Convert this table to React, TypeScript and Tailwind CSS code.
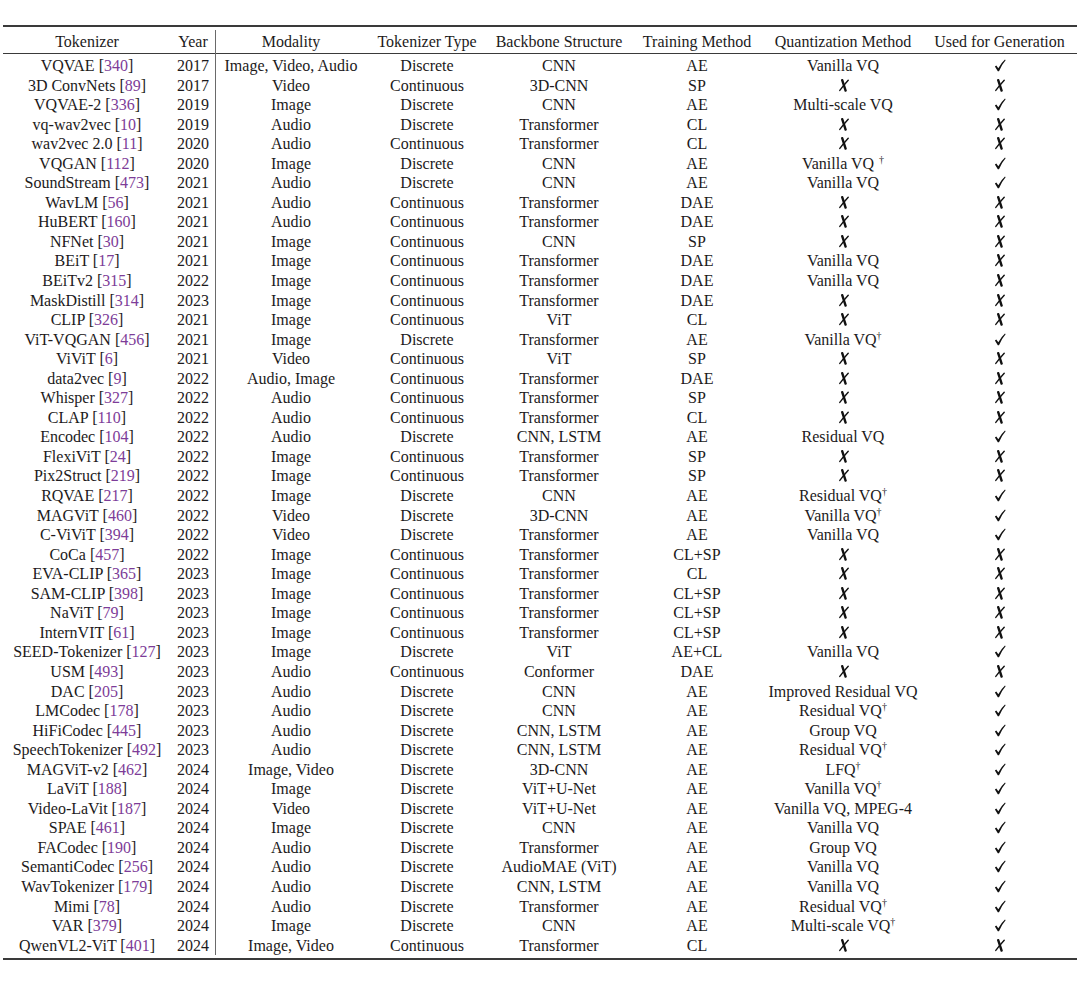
import React from "react";

type Row = [string, string, string, string, string, string, string, string, string];
// name, ref, year, modality, type, backbone, training, quant, used
const rows: Row[] = [
  ["VQVAE", "340", "2017", "Image, Video, Audio", "Discrete", "CNN", "AE", "Vanilla VQ", "y"],
  ["3D ConvNets", "89", "2017", "Video", "Continuous", "3D-CNN", "SP", "x", "x"],
  ["VQVAE-2", "336", "2019", "Image", "Discrete", "CNN", "AE", "Multi-scale VQ", "y"],
  ["vq-wav2vec", "10", "2019", "Audio", "Discrete", "Transformer", "CL", "x", "x"],
  ["wav2vec 2.0", "11", "2020", "Audio", "Continuous", "Transformer", "CL", "x", "x"],
  ["VQGAN", "112", "2020", "Image", "Discrete", "CNN", "AE", "Vanilla VQ |s", "y"],
  ["SoundStream", "473", "2021", "Audio", "Discrete", "CNN", "AE", "Vanilla VQ", "y"],
  ["WavLM", "56", "2021", "Audio", "Continuous", "Transformer", "DAE", "x", "x"],
  ["HuBERT", "160", "2021", "Audio", "Continuous", "Transformer", "DAE", "x", "x"],
  ["NFNet", "30", "2021", "Image", "Continuous", "CNN", "SP", "x", "x"],
  ["BEiT", "17", "2021", "Image", "Continuous", "Transformer", "DAE", "Vanilla VQ", "x"],
  ["BEiTv2", "315", "2022", "Image", "Continuous", "Transformer", "DAE", "Vanilla VQ", "x"],
  ["MaskDistill", "314", "2023", "Image", "Continuous", "Transformer", "DAE", "x", "x"],
  ["CLIP", "326", "2021", "Image", "Continuous", "ViT", "CL", "x", "x"],
  ["ViT-VQGAN", "456", "2021", "Image", "Discrete", "Transformer", "AE", "Vanilla VQ|", "y"],
  ["ViViT", "6", "2021", "Video", "Continuous", "ViT", "SP", "x", "x"],
  ["data2vec", "9", "2022", "Audio, Image", "Continuous", "Transformer", "DAE", "x", "x"],
  ["Whisper", "327", "2022", "Audio", "Continuous", "Transformer", "SP", "x", "x"],
  ["CLAP", "110", "2022", "Audio", "Continuous", "Transformer", "CL", "x", "x"],
  ["Encodec", "104", "2022", "Audio", "Discrete", "CNN, LSTM", "AE", "Residual VQ", "y"],
  ["FlexiViT", "24", "2022", "Image", "Continuous", "Transformer", "SP", "x", "x"],
  ["Pix2Struct", "219", "2022", "Image", "Continuous", "Transformer", "SP", "x", "x"],
  ["RQVAE", "217", "2022", "Image", "Discrete", "CNN", "AE", "Residual VQ|", "y"],
  ["MAGViT", "460", "2022", "Video", "Discrete", "3D-CNN", "AE", "Vanilla VQ|", "y"],
  ["C-ViViT", "394", "2022", "Video", "Discrete", "Transformer", "AE", "Vanilla VQ", "y"],
  ["CoCa", "457", "2022", "Image", "Continuous", "Transformer", "CL+SP", "x", "x"],
  ["EVA-CLIP", "365", "2023", "Image", "Continuous", "Transformer", "CL", "x", "x"],
  ["SAM-CLIP", "398", "2023", "Image", "Continuous", "Transformer", "CL+SP", "x", "x"],
  ["NaViT", "79", "2023", "Image", "Continuous", "Transformer", "CL+SP", "x", "x"],
  ["InternVIT", "61", "2023", "Image", "Continuous", "Transformer", "CL+SP", "x", "x"],
  ["SEED-Tokenizer", "127", "2023", "Image", "Discrete", "ViT", "AE+CL", "Vanilla VQ", "y"],
  ["USM", "493", "2023", "Audio", "Continuous", "Conformer", "DAE", "x", "x"],
  ["DAC", "205", "2023", "Audio", "Discrete", "CNN", "AE", "Improved Residual VQ", "y"],
  ["LMCodec", "178", "2023", "Audio", "Discrete", "CNN", "AE", "Residual VQ|", "y"],
  ["HiFiCodec", "445", "2023", "Audio", "Discrete", "CNN, LSTM", "AE", "Group VQ", "y"],
  ["SpeechTokenizer", "492", "2023", "Audio", "Discrete", "CNN, LSTM", "AE", "Residual VQ|", "y"],
  ["MAGViT-v2", "462", "2024", "Image, Video", "Discrete", "3D-CNN", "AE", "LFQ|", "y"],
  ["LaViT", "188", "2024", "Image", "Discrete", "ViT+U-Net", "AE", "Vanilla VQ|", "y"],
  ["Video-LaVit", "187", "2024", "Video", "Discrete", "ViT+U-Net", "AE", "Vanilla VQ, MPEG-4", "y"],
  ["SPAE", "461", "2024", "Image", "Discrete", "CNN", "AE", "Vanilla VQ", "y"],
  ["FACodec", "190", "2024", "Audio", "Discrete", "Transformer", "AE", "Group VQ", "y"],
  ["SemantiCodec", "256", "2024", "Audio", "Discrete", "AudioMAE (ViT)", "AE", "Vanilla VQ", "y"],
  ["WavTokenizer", "179", "2024", "Audio", "Discrete", "CNN, LSTM", "AE", "Vanilla VQ", "y"],
  ["Mimi", "78", "2024", "Audio", "Discrete", "Transformer", "AE", "Residual VQ|", "y"],
  ["VAR", "379", "2024", "Image", "Discrete", "CNN", "AE", "Multi-scale VQ|", "y"],
  ["QwenVL2-ViT", "401", "2024", "Image, Video", "Continuous", "Transformer", "CL", "x", "x"],
];

const grid =
  "grid grid-cols-[168px_45px_150px_122px_142px_134px_158px_155px]";

function Check() {
  return (
    <svg width="12" height="13" viewBox="0 0 12 13" className="inline-block align-[-1px]">
      <path
        d="M0.9 7.6 L2.3 6.6 L4.3 9.3 Q7 4.2 11 0.6 L11.6 1.3 Q7.8 5.6 5.0 12.2 L3.8 12.2 Z"
        fill="#111"
      />
    </svg>
  );
}

function Cross() {
  return (
    <svg width="11" height="13" viewBox="0 0 11 13" className="inline-block align-[-1px]">
      <path d="M4.2 1.2 Q5.8 6 7.6 11.6" stroke="#111" strokeWidth="2.4" fill="none" strokeLinecap="round" />
      <path d="M10.2 1.3 Q6 6 1.8 11.4" stroke="#111" strokeWidth="1.4" fill="none" strokeLinecap="round" />
    </svg>
  );
}

function Mark({ v }: { v: string }) {
  return v === "y" ? <Check /> : <Cross />;
}

function Dagger() {
  return <span className="text-[10px] relative top-[-6px] leading-none text-[#1c1a1b]">†</span>;
}

function Quant({ v }: { v: string }) {
  if (v === "x") return <Cross />;
  if (v.endsWith(" |s")) {
    return (
      <span>
        {v.slice(0, -3)}
        <span className="inline-block w-[5px]" />
        <Dagger />
      </span>
    );
  }
  if (v.endsWith("|")) {
    return (
      <span>
        {v.slice(0, -1)}
        <Dagger />
      </span>
    );
  }
  return <span>{v}</span>;
}

export default function App() {
  return (
    <div className="w-[1080px] h-[989px] bg-white px-[3px] pt-[25px] text-[#1c1a1b] font-['Liberation_Serif',serif] text-[16px]">
      <div className="h-[2px] bg-[#3a3a3a]" />
      <div className={`${grid} h-[26px] items-stretch text-center`}>
        <div className="flex items-center justify-center pb-[4px]">Tokenizer</div>
        <div className="my-[3px] border-r border-[#6a6a6a] flex items-center justify-center pb-[3px]">Year</div>
        <div className="flex items-center justify-center pb-[4px]">Modality</div>
        <div className="flex items-center justify-center pb-[4px]">Tokenizer Type</div>
        <div className="flex items-center justify-center pb-[4px]">Backbone Structure</div>
        <div className="flex items-center justify-center pb-[4px]">Training Method</div>
        <div className="flex items-center justify-center pb-[4px]">Quantization Method</div>
        <div className="flex items-center justify-center pb-[4px]">Used for Generation</div>
      </div>
      <div className="h-[1px] bg-[#3a3a3a]" />
      <div className="pt-[2px] pb-[3px]">
        {rows.map((r, i) => (
          <div key={i} className={`${grid} h-[19.55px] leading-[19.55px] text-center whitespace-nowrap`}>
            <div>
              {r[0]} [<span className="text-[#7d3c98]">{r[1]}</span>]
            </div>
            <div className="border-r border-[#6a6a6a]">{r[2]}</div>
            <div>{r[3]}</div>
            <div>{r[4]}</div>
            <div>{r[5]}</div>
            <div>{r[6]}</div>
            <div>
              <Quant v={r[7]} />
            </div>
            <div>
              <Mark v={r[8]} />
            </div>
          </div>
        ))}
      </div>
      <div className="h-[2px] bg-[#3a3a3a]" />
    </div>
  );
}
